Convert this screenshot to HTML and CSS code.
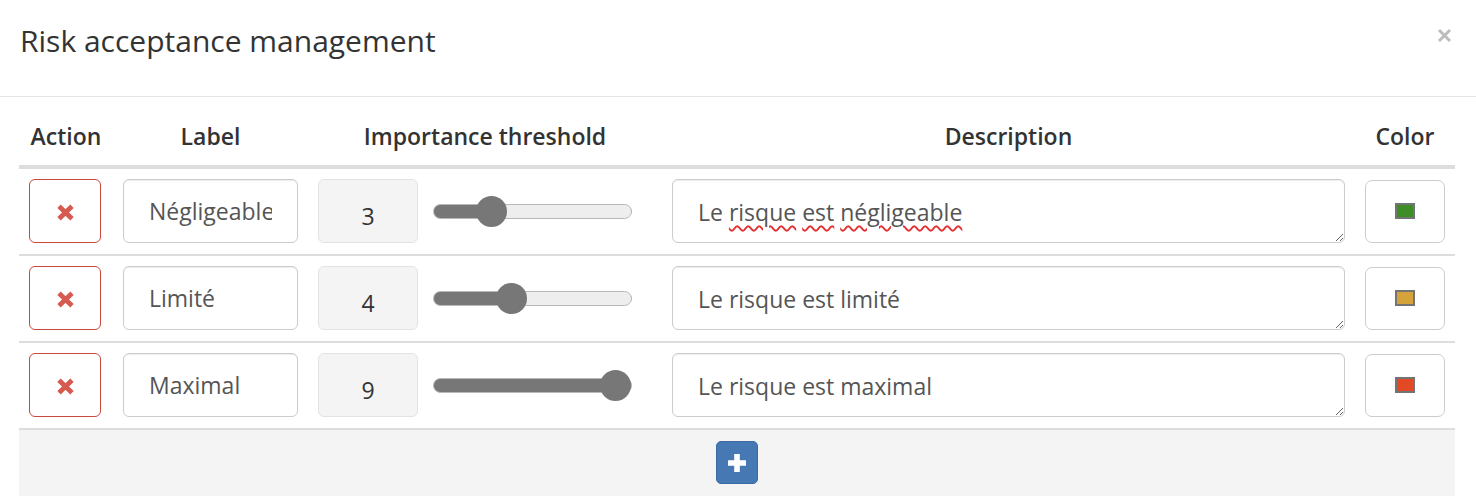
FILE: index.html
```html
<!DOCTYPE html>
<html lang="en">
<head>
<meta charset="utf-8">
<title>Risk acceptance management</title>
<link rel="stylesheet" href="styles.css">
</head>
<body>
<div class="modal">
  <div class="modal-header">
    <h4 class="modal-title">Risk acceptance management</h4>
    <button class="close" type="button" aria-label="Close">
      <svg width="15" height="15" viewBox="0 0 15 15"><path d="M2 2 L13 13 M13 2 L2 13" stroke="#bdbdbd" stroke-width="3" fill="none"/></svg>
    </button>
  </div>
  <div class="modal-body">
    <table class="risk-table">
      <colgroup>
        <col class="c-action"><col class="c-label"><col class="c-threshold"><col class="c-desc"><col class="c-color">
      </colgroup>
      <thead>
        <tr><th>Action</th><th>Label</th><th>Importance threshold</th><th>Description</th><th>Color</th></tr>
      </thead>
      <tbody>
        <tr>
          <td><button class="btn-remove" type="button"><svg class="x-icon" width="19" height="17" viewBox="0 0 19 17"><path d="M3 2.2 L16 14.8 M16 2.2 L3 14.8" stroke="#d65a50" stroke-width="4.8" fill="none"/></svg></button></td>
          <td><input class="label-input" type="text" value="Négligeable"></td>
          <td><div class="threshold"><input class="num-input" type="text" value="3" readonly><input class="range" type="range" min="1" max="9" value="3" style="--fill:28.9%"></div></td>
          <td><div class="desc">Le <span class="misspelled">risque</span> <span class="misspelled">est</span> <span class="misspelled">négligeable</span></div></td>
          <td><button class="btn-color" type="button"><span class="swatch swatch-green"></span></button></td>
        </tr>
        <tr>
          <td><button class="btn-remove" type="button"><svg class="x-icon" width="19" height="17" viewBox="0 0 19 17"><path d="M3 2.2 L16 14.8 M16 2.2 L3 14.8" stroke="#d65a50" stroke-width="4.8" fill="none"/></svg></button></td>
          <td><input class="label-input" type="text" value="Limité"></td>
          <td><div class="threshold"><input class="num-input" type="text" value="4" readonly><input class="range" type="range" min="1" max="9" value="4" style="--fill:39.4%"></div></td>
          <td><div class="desc">Le risque est limité</div></td>
          <td><button class="btn-color" type="button"><span class="swatch swatch-gold"></span></button></td>
        </tr>
        <tr>
          <td><button class="btn-remove" type="button"><svg class="x-icon" width="19" height="17" viewBox="0 0 19 17"><path d="M3 2.2 L16 14.8 M16 2.2 L3 14.8" stroke="#d65a50" stroke-width="4.8" fill="none"/></svg></button></td>
          <td><input class="label-input" type="text" value="Maximal"></td>
          <td><div class="threshold"><input class="num-input" type="text" value="9" readonly><input class="range" type="range" min="1" max="9" value="9" style="--fill:100%"></div></td>
          <td><div class="desc">Le risque est maximal</div></td>
          <td><button class="btn-color" type="button"><span class="swatch swatch-red"></span></button></td>
        </tr>
      </tbody>
      <tfoot>
        <tr>
          <td class="add-cell" colspan="5">
            <button class="btn-add" type="button" aria-label="Add">
              <svg width="20" height="20" viewBox="0 0 20 20"><path d="M7.2 1 H12.8 V7.2 H19 V12.8 H12.8 V19 H7.2 V12.8 H1 V7.2 H7.2 Z" fill="#fff"/></svg>
            </button>
          </td>
        </tr>
      </tfoot>
    </table>
  </div>
</div>
</body>
</html>
```

FILE: styles.css
```css
html, body {
  overflow: hidden;
}

body {
  margin: 0;
  font-family: "Open Sans", "Liberation Sans", sans-serif;
  color: #333;
  background: #fff;
}

.modal-header {
  display: flex;
  justify-content: space-between;
  align-items: flex-start;
  height: 97px;
  box-sizing: border-box;
  padding: 20px 24px 0 20px;
  border-bottom: 1px solid #e5e5e5;
}

.modal-title {
  margin: 0;
  font-size: 30px;
  line-height: 42px;
  font-weight: 400;
  color: #333;
}

.close {
  margin-top: 8px;
  padding: 0;
  border: 0;
  background: transparent;
  width: 15px;
  height: 15px;
  display: flex;
}

.modal-body {
  padding: 20px 21px 0 19px;
}

.risk-table {
  width: 1436px;
  border-collapse: collapse;
  table-layout: fixed;
}

.c-action { width: 94px; }
.c-label { width: 195px; }
.c-threshold { width: 354px; }
.c-desc { width: 693px; }
.c-color { width: 100px; }

.risk-table th {
  padding: 3px 10px 13px;
  font-size: 23px;
  line-height: 32px;
  font-weight: 600;
  text-align: center;
  color: #333;
  border-bottom: 4px solid #dddddd;
  white-space: nowrap;
}

.risk-table tbody td {
  padding: 10px 10px 11px;
  border-bottom: 2px solid #dddddd;
  vertical-align: middle;
}

button {
  font: inherit;
  cursor: pointer;
}

.btn-remove {
  width: 72px;
  height: 64px;
  padding: 0;
  border: 1px solid #c9483e;
  border-radius: 6px;
  background: #fff;
  display: flex;
  align-items: center;
  justify-content: center;
}

.x-icon {
  margin-top: 2px;
}

.label-input {
  display: block;
  width: 175px;
  height: 64px;
  box-sizing: border-box;
  padding: 0 25px;
  border: 1px solid #cccccc;
  border-radius: 6px;
  box-shadow: inset 0 1px 1px rgba(0, 0, 0, 0.075);
  font-family: inherit;
  font-size: 23px;
  color: #555;
  background: #fff;
  outline: none;
}

.threshold {
  display: flex;
  align-items: center;
  gap: 15px;
}

.num-input {
  display: block;
  width: 100px;
  height: 64px;
  box-sizing: border-box;
  padding: 10px 0 0;
  border: 1px solid #e3e3e3;
  border-radius: 6px;
  background: #f4f4f4;
  font-family: inherit;
  font-size: 23px;
  color: #333;
  text-align: center;
  outline: none;
}

.range {
  -webkit-appearance: none;
  appearance: none;
  width: 199px;
  height: 31px;
  margin: 0;
  padding: 0;
  background: transparent;
}

.range::-webkit-slider-runnable-track {
  height: 15px;
  box-sizing: border-box;
  border: 1px solid #b8b8b8;
  border-radius: 8px;
  background: linear-gradient(to right, #777777 var(--fill), #eeeeee var(--fill));
}

.range::-webkit-slider-thumb {
  -webkit-appearance: none;
  appearance: none;
  width: 31px;
  height: 31px;
  margin-top: -9px;
  border: 0;
  border-radius: 50%;
  background: #777777;
}

.desc {
  width: 673px;
  height: 64px;
  box-sizing: border-box;
  padding: 16px 25px 0;
  border: 1px solid #cccccc;
  border-radius: 6px;
  box-shadow: inset 0 1px 1px rgba(0, 0, 0, 0.075);
  font-size: 23px;
  line-height: 32px;
  color: #555;
  overflow: auto;
  resize: vertical;
  white-space: nowrap;
}

.misspelled {
  text-decoration: underline wavy #e53030;
  text-decoration-thickness: 1.5px;
  text-underline-offset: 4px;
}

.btn-color {
  width: 80px;
  height: 63px;
  padding: 0;
  border: 1px solid #cccccc;
  border-radius: 7px;
  background: #fff;
  display: flex;
  align-items: center;
  justify-content: center;
}

.swatch {
  display: block;
  width: 20px;
  height: 16px;
  box-sizing: border-box;
  border: 2px solid #747474;
}

.swatch-green { background: #3e8e28; }
.swatch-gold { background: #d5a33a; }
.swatch-red { background: #e24a26; }

.risk-table .add-cell {
  padding: 11px 0 20px;
  background: #f4f4f4;
  text-align: center;
  border: 0;
}

.btn-add {
  width: 42px;
  height: 43px;
  padding: 0;
  border: 1px solid #3b6aa3;
  border-radius: 5px;
  background: #4678b3;
  display: inline-flex;
  align-items: center;
  justify-content: center;
  vertical-align: top;
}
```
